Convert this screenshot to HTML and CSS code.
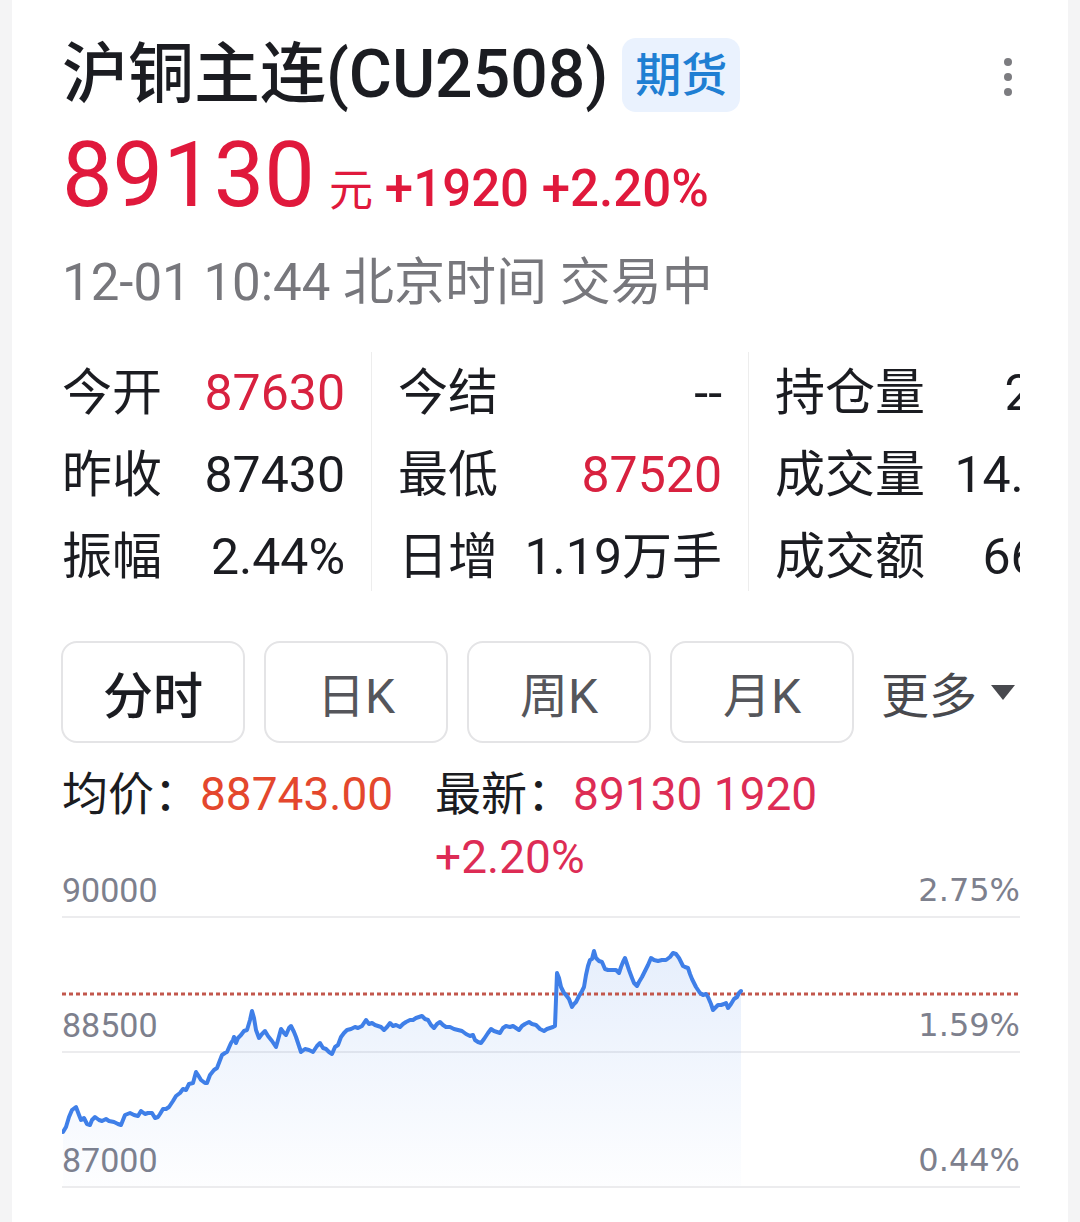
FILE: index.html
```html
<!DOCTYPE html>
<html>
    <head>
        <meta charset=utf-8>
        <title>沪铜主连(CU2508)</title>
        <link rel="stylesheet" href="styles.css">
    </head>
    <body>
        <div class="panel">
            <div class="title-row">
                <h1 class="name">沪铜主连(CU2508)</h1>
                <span class="badge">期货</span>
                <span class="more-menu"><i></i><i></i><i></i></span>
            </div>

            <div class="price-row">
                <span class="price">89130</span>
                <span class="unit">元</span>
                <span class="change">+1920 +2.20%</span>
            </div>

            <div class="time">12-01 10:44 北京时间 交易中</div>

            <div class="stats">
                <div class="stat-col first">
                    <div class="stat"><span>今开</span><span class="up">87630</span></div>
                    <div class="stat"><span>昨收</span><span>87430</span></div>
                    <div class="stat"><span>振幅</span><span>2.44%</span></div>
                </div>
                <div class="stat-col middle">
                    <div class="stat"><span>今结</span><span>--</span></div>
                    <div class="stat"><span>最低</span><span class="up">87520</span></div>
                    <div class="stat"><span>日增</span><span>1.19万手</span></div>
                </div>
                <div class="stat-col last">
                    <div class="stat"><span>持仓量</span><span>21.65万</span></div>
                    <div class="stat"><span>成交量</span><span>14.25万手</span></div>
                    <div class="stat"><span>成交额</span><span>66.3亿元</span></div>
                </div>
            </div>

            <div class="tabs">
                <div class="tab active">分时</div>
                <div class="tab">日K</div>
                <div class="tab">周K</div>
                <div class="tab">月K</div>
                <div class="tab-more">更多<span class="caret"></span></div>
            </div>

            <div class="legend">
                <div class="legend-item"><span>均价：</span><span class="avg">88743.00</span></div>
                <div class="legend-item latest"><span class="dark">最新：</span>89130 1920 +2.20%</div>
            </div>

            <div class="chart">
                <div class="chart-row top"><span>90000</span><span class="pct">2.75%</span></div>
                <div class="chart-row"><span>88500</span><span class="pct">1.59%</span></div>
                <div class="chart-row"><span>87000</span><span class="pct">0.44%</span></div>

                <svg class="plot" width="958" height="320" viewBox="62 870 958 320">
                    <defs>
                        <linearGradient id="fill" x1="0" y1="0" x2="0" y2="1">
                            <stop offset="0" stop-color="#3f7fe8" stop-opacity="0.13"/>
                            <stop offset="1" stop-color="#3f7fe8" stop-opacity="0.01"/>
                        </linearGradient>
                    </defs>
                    <polygon fill="url(#fill)" points="63,1186 63,1132 66,1127 69,1117 72,1110 76,1107 79,1115 81,1120 84,1118 87,1124 90,1125 92,1120 95,1117 99,1120 102,1121 106,1119 109,1121 114,1122 118,1124 121,1125 125,1115 130,1113 134,1115 138,1116 141,1111 145,1114 148,1113 152,1113 155,1118 158,1117 160,1114 163,1109 166,1109 169,1107 173,1101 176,1096 180,1093 183,1089 186,1090 189,1084 193,1083 196,1072 198,1075 201,1080 205,1083 207,1083 210,1075 214,1070 217,1068 222,1055 225,1053 227,1052 231,1043 233,1040 234,1037 236,1043 238,1038 241,1035 244,1031 247,1030 250,1020 252,1011 254,1018 256,1030 259,1038 262,1034 265,1031 268,1036 272,1041 276,1047 278,1040 281,1029 284,1033 286,1035 289,1028 291,1026 294,1032 296,1037 299,1046 301,1052 305,1049 309,1050 313,1052 317,1046 320,1043 323,1048 326,1049 329,1052 332,1054 335,1047 338,1045 341,1037 344,1033 347,1030 351,1029 355,1027 358,1028 362,1026 364,1023 366,1020 369,1024 372,1023 375,1025 378,1026 381,1027 384,1030 387,1027 390,1023 393,1026 396,1025 400,1027 403,1024 406,1022 410,1020 413,1020 416,1018 419,1017 422,1016 425,1019 428,1020 431,1025 434,1028 437,1024 440,1022 443,1025 446,1027 450,1027 454,1029 458,1030 462,1031 466,1034 470,1036 473,1035 475,1040 478,1042 481,1043 484,1039 488,1033 491,1029 494,1031 497,1032 500,1033 503,1028 506,1026 510,1027 513,1026 516,1028 519,1030 522,1026 525,1024 529,1022 532,1024 536,1025 540,1029 544,1031 547,1029 550,1028 553,1027 555,1026 557,973 559,978 561,987 564,993 566,995 569,999 572,1007 574,1004 576,1002 579,996 582,991 584,987 586,975 588,966 590,960 592,959 594,951 596,958 599,961 602,962 605,969 608,970 612,970 616,970 619,973 621,967 623,962 625,958 627,964 629,970 632,978 634,983 637,986 639,982 642,977 645,971 648,965 651,958 654,960 658,961 662,960 666,960 670,957 673,953 676,954 679,958 681,962 683,966 685,967 688,968 690,974 692,979 694,983 696,987 700,993 703,995 706,994 708,997 711,1004 713,1010 716,1007 718,1005 721,1005 724,1004 726,1003 728,1008 731,1004 734,999 737,997 739,993 741,991 741,1186"/>
                    <line class="latest-line" x1="62" y1="994" x2="1020" y2="994"/>
                    <polyline class="price-line" points="63,1132 66,1127 69,1117 72,1110 76,1107 79,1115 81,1120 84,1118 87,1124 90,1125 92,1120 95,1117 99,1120 102,1121 106,1119 109,1121 114,1122 118,1124 121,1125 125,1115 130,1113 134,1115 138,1116 141,1111 145,1114 148,1113 152,1113 155,1118 158,1117 160,1114 163,1109 166,1109 169,1107 173,1101 176,1096 180,1093 183,1089 186,1090 189,1084 193,1083 196,1072 198,1075 201,1080 205,1083 207,1083 210,1075 214,1070 217,1068 222,1055 225,1053 227,1052 231,1043 233,1040 234,1037 236,1043 238,1038 241,1035 244,1031 247,1030 250,1020 252,1011 254,1018 256,1030 259,1038 262,1034 265,1031 268,1036 272,1041 276,1047 278,1040 281,1029 284,1033 286,1035 289,1028 291,1026 294,1032 296,1037 299,1046 301,1052 305,1049 309,1050 313,1052 317,1046 320,1043 323,1048 326,1049 329,1052 332,1054 335,1047 338,1045 341,1037 344,1033 347,1030 351,1029 355,1027 358,1028 362,1026 364,1023 366,1020 369,1024 372,1023 375,1025 378,1026 381,1027 384,1030 387,1027 390,1023 393,1026 396,1025 400,1027 403,1024 406,1022 410,1020 413,1020 416,1018 419,1017 422,1016 425,1019 428,1020 431,1025 434,1028 437,1024 440,1022 443,1025 446,1027 450,1027 454,1029 458,1030 462,1031 466,1034 470,1036 473,1035 475,1040 478,1042 481,1043 484,1039 488,1033 491,1029 494,1031 497,1032 500,1033 503,1028 506,1026 510,1027 513,1026 516,1028 519,1030 522,1026 525,1024 529,1022 532,1024 536,1025 540,1029 544,1031 547,1029 550,1028 553,1027 555,1026 557,973 559,978 561,987 564,993 566,995 569,999 572,1007 574,1004 576,1002 579,996 582,991 584,987 586,975 588,966 590,960 592,959 594,951 596,958 599,961 602,962 605,969 608,970 612,970 616,970 619,973 621,967 623,962 625,958 627,964 629,970 632,978 634,983 637,986 639,982 642,977 645,971 648,965 651,958 654,960 658,961 662,960 666,960 670,957 673,953 676,954 679,958 681,962 683,966 685,967 688,968 690,974 692,979 694,983 696,987 700,993 703,995 706,994 708,997 711,1004 713,1010 716,1007 718,1005 721,1005 724,1004 726,1003 728,1008 731,1004 734,999 737,997 739,993 741,991"/>
                </svg>
            </div>
        </div>
    </body>
</html>
```

FILE: styles.css
```css
html, body {
    margin: 0;
    padding: 0;
    background: #f4f4f5;
}

body {
    font-family: Roboto, "Noto Sans CJK SC", sans-serif;
    color: #1b1c21;
}

.panel {
    margin: 0 12px;
    min-height: 1222px;
    padding: 35px 48px 0 50px;
    background: #fff;
    box-sizing: border-box;
}

/* header */

.title-row {
    display: flex;
    align-items: center;
    height: 80px;
}

.name {
    margin: 0;
    font-size: 66px;
    line-height: 80px;
    font-weight: 500;
    color: #1b1c21;
}

.badge {
    margin-left: 14px;
    padding: 0 13px;
    height: 74px;
    line-height: 74px;
    border-radius: 14px;
    background: #eaf2fe;
    color: #1f7fd3;
    font-size: 46px;
    font-weight: 500;
}

.more-menu {
    margin-left: auto;
    margin-right: 8px;
    display: flex;
    flex-direction: column;
    gap: 7px;
    padding-top: 4px;
}

.more-menu i {
    display: block;
    width: 8px;
    height: 8px;
    border-radius: 50%;
    background: #7c7c80;
}

.price-row {
    margin-top: 13px;
    height: 96px;
    line-height: 96px;
    color: #e0193c;
    white-space: nowrap;
}

.price {
    font-size: 90px;
}

.unit {
    margin-left: 10px;
    font-size: 44px;
    line-height: 1;
}

.change {
    margin-left: 8px;
    font-size: 51px;
    font-weight: 500;
    line-height: 1;
}

.time {
    margin-top: 29px;
    font-size: 51px;
    line-height: 60px;
    color: #77777c;
}

/* stats */

.stats {
    display: flex;
    margin-top: 39px;
    overflow: hidden;
    font-size: 50px;
}

.stat-col {
    flex: none;
    padding: 0 26px;
    border-left: 1px solid #ededed;
    margin-bottom: 7px;
}

.stat-col.first {
    width: 283px;
    padding-left: 0;
    border-left: none;
}

.stat-col.middle {
    width: 324px;
}

.stat-col.last {
    width: 405px;
}

.stat {
    display: flex;
    justify-content: space-between;
    height: 82px;
    line-height: 82px;
    white-space: nowrap;
}

.stat:last-child {
    height: 75px;
}

.up {
    color: #d8213f;
}

/* tabs */

.tabs {
    display: flex;
    align-items: center;
    gap: 19px;
    margin: 43px 0 0 -1px;
}

.tab {
    flex: none;
    width: 184px;
    height: 102px;
    box-sizing: border-box;
    border: 2px solid #e4e4e6;
    border-radius: 16px;
    display: flex;
    align-items: center;
    justify-content: center;
    font-size: 48px;
    color: #55565b;
}

.tab.active {
    color: #1b1c21;
    font-weight: 500;
    font-size: 50px;
}

.tab-more {
    flex: 1;
    display: flex;
    align-items: center;
    justify-content: flex-end;
    font-size: 48px;
    color: #48494e;
    padding-right: 5px;
}

.caret {
    margin-left: 14px;
    width: 0;
    height: 0;
    border-left: 12px solid transparent;
    border-right: 12px solid transparent;
    border-top: 15px solid #48494e;
}

/* legend */

.legend {
    display: flex;
    gap: 42px;
    margin-top: 20px;
    font-size: 46px;
    line-height: 63px;
}

.legend-item {
    white-space: nowrap;
}

.avg {
    color: #e4472d;
}

.legend-item.latest {
    white-space: normal;
    width: 420px;
    color: #dd2c55;
}

.dark {
    color: #1b1c21;
}

/* chart */

.chart {
    position: relative;
    margin-top: -19px;
}

.chart-row {
    display: flex;
    justify-content: space-between;
    align-items: flex-end;
    height: 135px;
    box-sizing: border-box;
    padding-bottom: 6px;
    border-bottom: 2px solid #ececee;
    font-size: 34px;
    line-height: 40px;
    color: #7d808d;
}

.chart-row.top {
    height: 48px;
}

.pct {
    font-family: "DejaVu Sans", sans-serif;
    font-size: 32px;
}

.plot {
    position: absolute;
    top: 0;
    left: 0;
}

.price-line {
    fill: none;
    stroke: #3f7fe8;
    stroke-width: 4;
    stroke-linejoin: round;
    stroke-linecap: round;
}

.latest-line {
    stroke: #c2574c;
    stroke-width: 3;
    stroke-dasharray: 4 3;
}
```
